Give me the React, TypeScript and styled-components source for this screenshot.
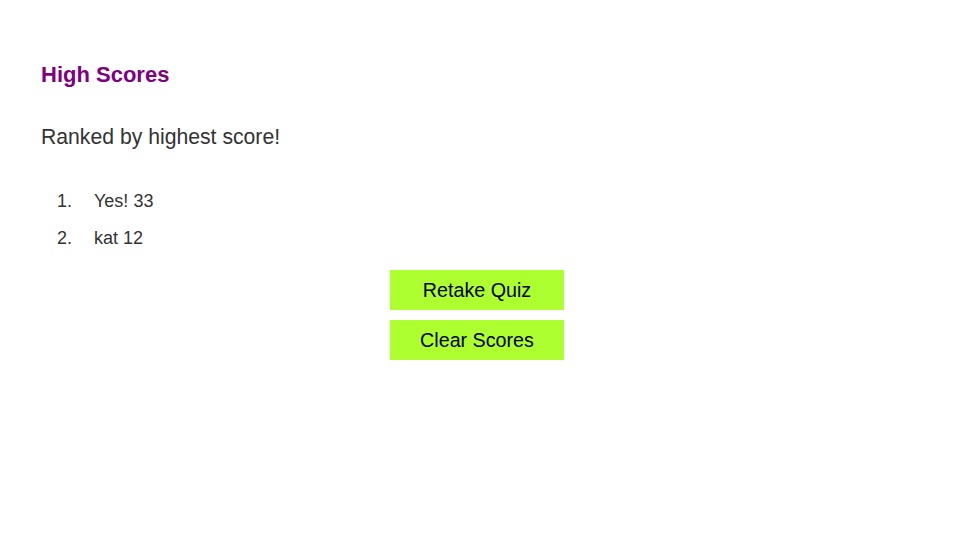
import React from "react";
import styled, { createGlobalStyle } from "styled-components";

const Global = createGlobalStyle`
  html, body { margin: 0; padding: 0; background: #fff; }
  body { font-family: "Liberation Sans", Arial, sans-serif; color: #333; }
`;

const Page = styled.main`
  padding: 60px 47px 0 41px;
  display: flex;
  flex-direction: column;
`;

const Title = styled.h1`
  margin: 0;
  font-size: 22px;
  line-height: 30px;
  font-weight: bold;
  color: #800080;
`;

const Subtitle = styled.p`
  margin: 32px 0 0;
  font-size: 21.2px;
  line-height: 30px;
  color: #333;
`;

const List = styled.ol`
  margin: 39px 0 0;
  padding: 0;
  list-style: none;
  display: flex;
  flex-direction: column;
  gap: 16px;
`;

const Item = styled.li`
  display: flex;
  font-size: 18px;
  line-height: 21px;
  color: #333;
`;

const Num = styled.span`
  width: 53px;
  padding-left: 16px;
  box-sizing: border-box;
`;

const Actions = styled.div`
  margin-top: 21px;
  display: flex;
  flex-direction: column;
  align-items: center;
  gap: 10px;
`;

const Button = styled.button`
  width: 174px;
  height: 40px;
  border: none;
  background: #adff2f;
  color: #000;
  font-family: "Liberation Sans", Arial, sans-serif;
  font-size: 19.7px;
  cursor: pointer;
`;

const scores = [
  { name: "Yes!", score: 33 },
  { name: "kat", score: 12 },
];

export default function App() {
  return (
    <>
      <Global />
      <Page>
        <Title>High Scores</Title>
        <Subtitle>Ranked by highest score!</Subtitle>
        <List>
          {scores.map((s, i) => (
            <Item key={i}>
              <Num>{i + 1}.</Num>
              <span>
                {s.name} {s.score}
              </span>
            </Item>
          ))}
        </List>
        <Actions>
          <Button>Retake Quiz</Button>
          <Button>Clear Scores</Button>
        </Actions>
      </Page>
    </>
  );
}
